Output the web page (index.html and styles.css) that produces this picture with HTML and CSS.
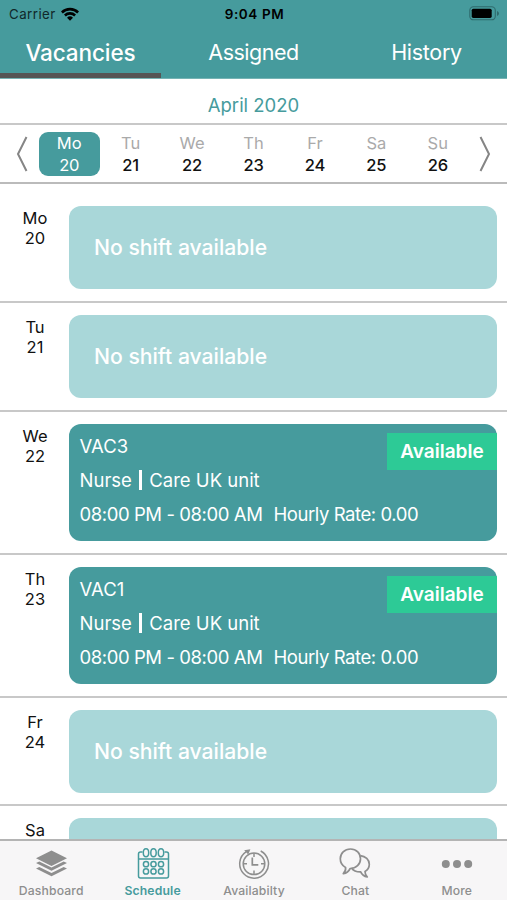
FILE: index.html
```html
<!DOCTYPE html>
<html lang="en">
<head>
<meta charset="utf-8">
<title>Schedule</title>
<link rel="stylesheet" href="styles.css">
</head>
<body>
<div class="app">
  <header class="header">
    <div class="status">
      <div class="carrier"><span>Carrier</span>
        <svg class="wifi" viewBox="0 0 18 14" width="18" height="14"><path d="M0 4.4a13 13 0 0 1 18 0L16.2 6.4a10.3 10.3 0 0 0-14.4 0zM3 7.5a8.7 8.7 0 0 1 12 0l-1.8 2a6.1 6.1 0 0 0-8.4 0zM6 10.7a4.4 4.4 0 0 1 6 0L9 13.8z"/></svg>
      </div>
      <div class="clock">9:04 PM</div>
      <svg class="battery" viewBox="0 0 31 15" width="31" height="15"><rect x=".8" y=".8" width="25.5" height="13" rx="3.6" fill="none" stroke="#2f6b6d" stroke-width="1.1"/><rect x="2.7" y="2.7" width="20" height="9.2" rx="1.6"/><path d="M28 5v5q2-.7 2-2.500T28 5z" fill="#2f6b6d"/></svg>
    </div>
    <nav class="tabs">
      <div class="tab active"><span>Vacancies</span></div>
      <div class="tab assigned"><span>Assigned</span></div>
      <div class="tab history"><span>History</span></div>
    </nav>
  </header>
  <div class="month"><span>April 2020</span></div>
  <div class="week">
    <svg class="arrow" viewBox="0 0 12 38" width="12" height="38"><path d="M10.500 2L2 19l8.500 17"/></svg>
    <div class="days">
      <div class="day selected"><span>Mo</span><b>20</b></div>
      <div class="day"><span>Tu</span><b>21</b></div>
      <div class="day"><span>We</span><b>22</b></div>
      <div class="day"><span>Th</span><b>23</b></div>
      <div class="day"><span>Fr</span><b>24</b></div>
      <div class="day"><span>Sa</span><b>25</b></div>
      <div class="day"><span>Su</span><b>26</b></div>
    </div>
    <svg class="arrow" viewBox="0 0 12 38" width="12" height="38"><path d="M1.500 2L10 19 1.500 36"/></svg>
  </div>
  <main class="list">
    <section class="row first"><div class="date">Mo<br>20</div><div class="card empty"><span>No shift available</span></div></section>
    <section class="row"><div class="date">Tu<br>21</div><div class="card empty"><span>No shift available</span></div></section>
    <section class="row tall"><div class="date">We<br>22</div>
      <div class="card shift"><div class="info"><p class="code">VAC3</p><p class="unit">Nurse <i class="bar"></i> Care UK unit</p><p class="time"><span class="hours">08:00 PM - 08:00 AM</span><span class="rate">Hourly Rate: 0.00</span></p></div><div class="badge"><span>Available</span></div></div>
    </section>
    <section class="row tall"><div class="date">Th<br>23</div>
      <div class="card shift"><div class="info"><p class="code">VAC1</p><p class="unit">Nurse <i class="bar"></i> Care UK unit</p><p class="time"><span class="hours">08:00 PM - 08:00 AM</span><span class="rate">Hourly Rate: 0.00</span></p></div><div class="badge"><span>Available</span></div></div>
    </section>
    <section class="row"><div class="date">Fr<br>24</div><div class="card empty"><span>No shift available</span></div></section>
    <section class="row"><div class="date">Sa</div><div class="card empty"></div></section>
  </main>
  <footer class="tabbar">
    <div class="item dashboard">
      <svg viewBox="0 0 34 34" width="34" height="34"><g fill="#8e8e8e"><path d="M17.500 3.500L33 11.200 17.500 19 2 11.200z"/><path d="M2 16l3.300-1.600 12.200 6.100 12.200-6.100L33 16l-15.500 7.800z"/><path d="M2 21.500l3.300-1.600L17.500 26l12.200-6.100 3.300 1.600-15.500 7.800z"/></g></svg>
      <span>Dashboard</span>
    </div>
    <div class="item schedule">
      <svg viewBox="0 0 34 34" width="34" height="34" fill="none" stroke="#469b9d" stroke-width="1.500"><path d="M6.500 5H4.500Q2.500 5 2.500 7v22q0 2 2 2h26q2 0 2-2V7q0-2-2-2h-2M2.500 12h30"/><ellipse cx="10" cy="5.700" rx="2.700" ry="4"/><ellipse cx="17.500" cy="5.700" rx="2.700" ry="4"/><ellipse cx="25" cy="5.700" rx="2.700" ry="4"/><circle cx="10" cy="17.200" r="2.600"/><circle cx="17.500" cy="17.200" r="2.600"/><circle cx="25" cy="17.200" r="2.600"/><circle cx="10" cy="24.400" r="2.600"/><circle cx="17.500" cy="24.400" r="2.600"/><circle cx="25" cy="24.400" r="2.600"/></svg>
      <span>Schedule</span>
    </div>
    <div class="item availability">
      <svg viewBox="0 0 34 34" width="34" height="34" fill="none" stroke="#8e8e8e" stroke-width="1.500"><circle cx="17" cy="16.800" r="10.800"/><path d="M9.300 4.700A14.400 14.400 0 1 0 23.700 4M17 6v4M17 23.500v4M6 16.800h4M24 16.800h4"/><path d="M15.300 10.500v7.300h6" stroke-width="1.700"/><path d="M7.200 3.300l6.200-1-2.200 5.200z" fill="#8e8e8e" stroke="none"/></svg>
      <span>Availabilty</span>
    </div>
    <div class="item chat">
      <svg viewBox="0 0 34 34" width="34" height="34" fill="none" stroke="#8e8e8e" stroke-width="1.700" stroke-linejoin="round"><path d="M12.500 2C6.500 2 2.300 6.500 2.300 11.800c0 4 2.100 7 5.300 8.700.3 2.400-.5 4.400-2.300 6.200 3.200-.6 5.500-2.400 6.900-5.200 5.900 0 10.300-4.200 10.300-9.700S18.500 2 12.500 2z"/><path d="M22.300 8.600c5.200.6 9 4.200 9 8.700 0 3.200-1.600 5.700-4.300 7.100 0 2.100.7 3.900 2.300 5.600-3.200-.5-5.400-2.300-6.600-5.100-3.900.1-7.500-1.500-9.200-4"/></svg>
      <span>Chat</span>
    </div>
    <div class="item more">
      <svg viewBox="0 0 34 34" width="34" height="34" fill="#8e8e8e"><circle cx="5.800" cy="17" r="4"/><circle cx="17" cy="17" r="4"/><circle cx="28.200" cy="17" r="4"/></svg>
      <span>More</span>
    </div>
  </footer>
</div>
</body>
</html>
```
FILE: styles.css
```css
* { box-sizing: border-box; }
body { margin: 0; font-family: Inter, "Liberation Sans", sans-serif; background: #fff; color: #111; }
p { margin: 0; }
svg { display: block; flex: none; }
.app { width: 507px; height: 900px; display: flex; flex-direction: column; overflow: hidden; }
.header { height: 79px; flex: none; background: #469b9d; border-bottom: 1px solid #76b3b4; }
.status { height: 27px; padding: 0 7px 0 9px; display: grid; grid-template-columns: 1fr auto 1fr; align-items: center; color: #000; }
.carrier { display: flex; align-items: center; gap: 5px; font-size: 13.3px; letter-spacing: .45px; color: #10282a; }
.wifi { fill: #000; }
.clock { font-size: 13.500px; font-weight: 600; letter-spacing: .6px; }
.battery { justify-self: end; }
.tabs { height: 51px; display: grid; grid-template-columns: 161px 1fr 161px; color: #fff; font-size: 21.5px; line-height: 51px; text-align: center; }
.tab { height: 51px; border-bottom: 5px solid transparent; }
.active { border-color: #555; font-size: 22.500px; font-weight: 500; letter-spacing: -.1px; }
.assigned { letter-spacing: -.5px; }
.history { letter-spacing: -.3px; }
.month { height: 46px; flex: none; border-bottom: 2px solid #c8c8c8; color: #469b9d; text-align: center; font-size: 18.5px; line-height: 52px; }
.week { height: 59px; flex: none; border-bottom: 2px solid #bbb; display: flex; align-items: center; padding: 0 16px; justify-content: space-between; }
.arrow { fill: none; stroke: #858585; stroke-width: 2; }
.days { width: 430px; display: grid; grid-template-columns: repeat(7, 1fr); }
.day { height: 44px; display: flex; flex-direction: column; align-items: center; font-size: 16.500px; line-height: 22px; color: #aaa; }
.day b { font-weight: 500; letter-spacing: -.2px; color: #111; }
.selected { background: #469b9d; border-radius: 9px; color: #fff; }
.selected b { color: #fff; font-weight: 400; }
.list { height: 655px; overflow: hidden; flex: none; }
.row { height: 108.700px; border-bottom: 2px solid #c8c8c8; padding: 12px 10px 0 0; display: flex; }
.first { height: 119px; padding-top: 22px; }
.tall { height: 143px; }
.date { width: 69px; padding: 2px 0 0 1px; text-align: center; font-size: 16.500px; line-height: 20px; }
.card { flex: 1; border-radius: 12px; color: #fff; overflow: hidden; }
.empty { height: 83px; background: #a9d7d9; padding-left: 25px; font-size: 21.150px; font-weight: 500; line-height: 84px; }
.shift { height: 117.500px; background: #469b9d; display: flex; justify-content: space-between; font-size: 18.500px; }
.info { padding: 5px 0 0 10.500px; line-height: 34.200px; white-space: nowrap; }
.code { line-height: 34px; }
.bar { display: inline-block; width: 3px; height: 20px; margin: 0 2px; background: #fff; vertical-align: -3px; }
.time { display: flex; gap: 11px; letter-spacing: -.42px; }
.badge { width: 110px; height: 37px; margin: 9.500px 0 0 -110px; background: #2dca96; font-size: 19px; font-weight: 600; line-height: 38px; text-align: center; }
.tabbar { flex: 1; border-top: 2px solid #b4b4b4; background: #f7f6f7; display: grid; grid-template-columns: repeat(5, 1fr); color: #8e8e8e; }
.item { display: flex; flex-direction: column; align-items: center; padding: 6px 0 0 1px; font-size: 12.200px; font-weight: 500; line-height: 20px; letter-spacing: .15px; }
.schedule { color: #469b9d; font-weight: 600; }
```
